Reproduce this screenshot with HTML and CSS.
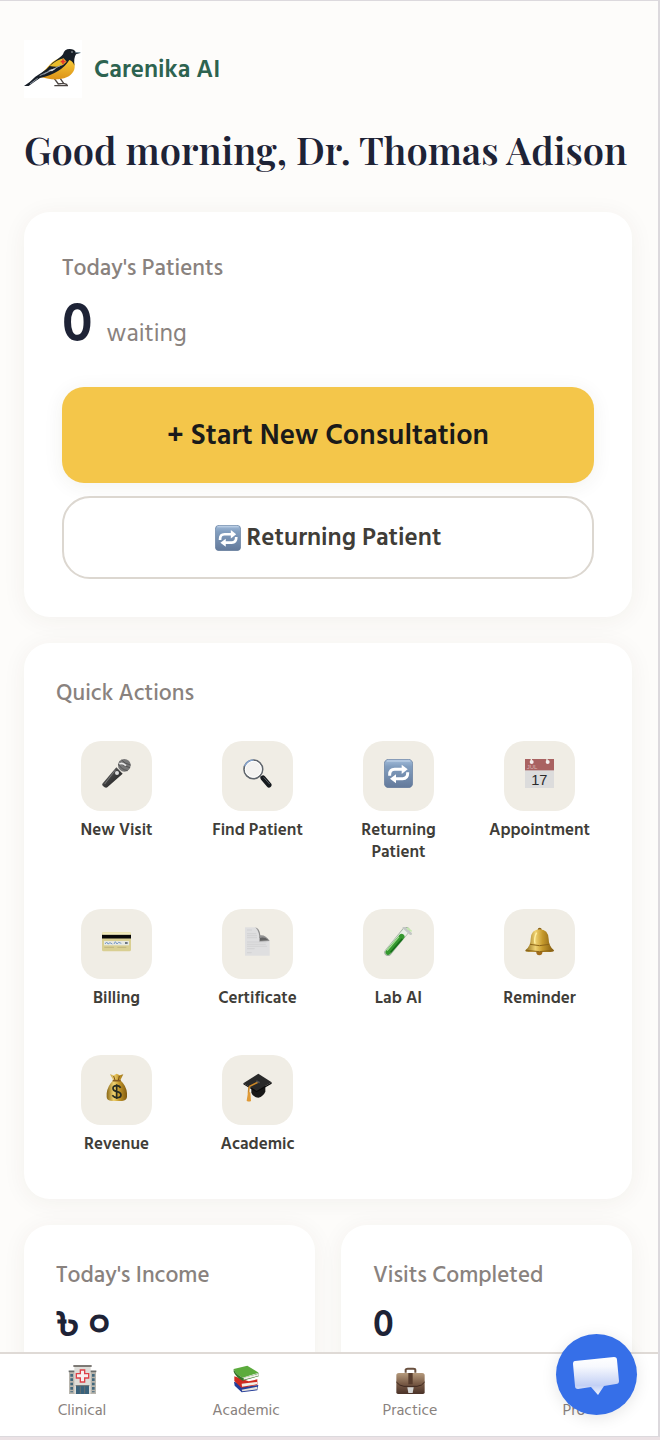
FILE: index.html
```
<!doctype html>
<html lang="en">
<head>
    <meta charset="UTF-8">
    <meta name="viewport" content="width=device-width, initial-scale=1">
    <title>Carenika AI</title>
    <link rel="stylesheet" href="styles.css">
</head>
<body>
<!-- shared icons and gradients -->
<svg class="defs" aria-hidden="true">
    <defs>
        <linearGradient id="blue" x1="0" y1="0" x2="0" y2="1">
            <stop offset="0" stop-color="#a3bddb"/>
            <stop offset=".25" stop-color="#829ebf"/>
            <stop offset="1" stop-color="#63799a"/>
        </linearGradient>
        <linearGradient id="gold" x1="0" y1="0" x2="1" y2="0">
            <stop offset="0" stop-color="#8a6816"/>
            <stop offset=".35" stop-color="#f0d272"/>
            <stop offset=".6" stop-color="#c69a2c"/>
            <stop offset="1" stop-color="#80590f"/>
        </linearGradient>
        <linearGradient id="leather" x1="0" y1="0" x2="0" y2="1">
            <stop offset="0" stop-color="#b59a7c"/>
            <stop offset=".5" stop-color="#7a5c47"/>
            <stop offset="1" stop-color="#4a3228"/>
        </linearGradient>
        <linearGradient id="belly" x1="0" y1="0" x2="0" y2="1">
            <stop offset="0" stop-color="#fbd23c"/>
            <stop offset="1" stop-color="#dc9218"/>
        </linearGradient>
        <linearGradient id="metal" x1="0" y1="0" x2="1" y2="1">
            <stop offset="0" stop-color="#8c8c8c"/>
            <stop offset=".5" stop-color="#3c3c3c"/>
            <stop offset="1" stop-color="#161616"/>
        </linearGradient>
        <linearGradient id="bubble" x1="0" y1="0" x2="0" y2="1">
            <stop offset="0" stop-color="#ffffff"/>
            <stop offset=".25" stop-color="#f7f9fe"/>
            <stop offset=".75" stop-color="#c3d0f5"/>
            <stop offset="1" stop-color="#eef2fd"/>
        </linearGradient>
    </defs>
    <symbol id="repeat" viewBox="0 0 87 87">
        <rect x="1" y="1" width="85" height="85" rx="13" fill="url(#blue)" stroke="#60789a" stroke-width="2"/>
        <path d="M9 6h69" stroke="#c6d7ea" stroke-width="3" stroke-linecap="round"/>
        <path d="M17 50V47Q17 31 32 31H56" fill="none" stroke="#fff" stroke-width="9"/>
        <path d="M53 17L71 31L53 45Z" fill="#fff"/>
        <path d="M71 40V43Q71 59 56 59H33" fill="none" stroke="#fff" stroke-width="9"/>
        <path d="M36 46L18 59L36 73Z" fill="#fff"/>
    </symbol>
</svg>

<div class="app">
    <main class="content">
        <header class="brand">
            <svg class="logo" viewBox="0 0 174 174" aria-hidden="true">
                <rect width="174" height="174" fill="#fff"/>
                <path d="M91 116L103 132M107 113L119 130M91 137H132M101 132L119 130L130 134" fill="none" stroke="#4b4543" stroke-width="4"/>
                <path d="M126 50C146 50 156 68 151 88C146 105 128 116 103 118C84 120 62 113 44 110C64 91 78 66 102 56Z" fill="url(#belly)"/>
                <path d="M0 138Q20 125 34 110Q52 99 68 87Q85 66 105 54Q112 50 117 43Q121 27 137 27Q151 27 155 36L170 38L156 43Q149 53 151 77Q147 63 136 60Q124 80 102 93Q78 108 48 114Q30 126 14 138Z" fill="#171e27"/>
                <path d="M77 78Q99 59 119 55L128 65Q118 77 104 80Q90 81 77 78Z" fill="#e9bd2a"/>
                <path d="M47 107L94 85M59 103L112 75M18 132L41 115" stroke="#8f98a5" stroke-width="3"/>
                <path d="M72 91L97 85L84 94Z" fill="#d9dde2"/>
                <path d="M117 58V73M110 65H125" stroke="#e5392c" stroke-width="5"/>
                <path d="M154 38L169 38" stroke="#7e99a6" stroke-width="3"/>
                <circle cx="144" cy="36" r="2" fill="#d3dce0"/>
            </svg>
            <span class="brand-name">Carenika AI</span>
        </header>
        <h1>Good morning, Dr. Thomas Adison</h1>

        <!-- patients -->
        <section class="card patients">
            <h2>Today's Patients</h2>
            <p class="count"><strong>0</strong> <span>waiting</span></p>
            <button type="button" class="btn btn-primary">+ Start New Consultation</button>
            <button type="button" class="btn btn-outline">
                <svg viewBox="0 0 87 87" aria-hidden="true"><use href="#repeat"/></svg>
                Returning Patient
            </button>
        </section>

        <!-- quick actions -->
        <section class="card">
            <h2>Quick Actions</h2>
            <div class="actions">
                <button type="button" class="action">
                    <span class="tile">
                        <svg viewBox="0 0 87 87" aria-hidden="true">
                            <path d="M43 25L62 44L16 85Q10 88 3 81Q-2 77 3 72Z" fill="url(#metal)"/>
                            <path d="M40 33L8 75" stroke="#777" stroke-width="3"/>
                            <circle cx="67" cy="19" r="19" fill="#777"/>
                            <path d="M49 15Q58 32 77 35M53 8Q63 22 84 26M59 3Q67 14 86 18" fill="none" stroke="#555" stroke-width="3"/>
                            <path d="M52 14Q62 10 72 20" fill="none" stroke="#e8e8e8" stroke-width="5"/>
                            <circle cx="45" cy="42" r="6" fill="#ddd"/>
                        </svg>
                    </span>
                    <span class="label">New Visit</span>
                </button>
                <button type="button" class="action">
                    <span class="tile">
                        <svg viewBox="0 0 87 87" aria-hidden="true">
                            <path d="M49 49L61 61" stroke="#8a8a8a" stroke-width="5"/>
                            <path d="M60 57L78 78" stroke="#15191d" stroke-width="15" stroke-linecap="round"/>
                            <path d="M62 55L80 75" stroke="#5c6266" stroke-width="3"/>
                            <circle cx="31" cy="31" r="28" fill="#f3f2f0" stroke="#5f656c" stroke-width="5"/>
                            <circle cx="31" cy="31" r="24" fill="none" stroke="#fff" stroke-width="3"/>
                            <path d="M5 22Q12 4 31 3" fill="none" stroke="#86a4cf" stroke-width="4"/>
                        </svg>
                    </span>
                    <span class="label">Find Patient</span>
                </button>
                <button type="button" class="action">
                    <span class="tile">
                        <svg viewBox="0 0 87 87" aria-hidden="true"><use href="#repeat"/></svg>
                    </span>
                    <span class="label">Returning Patient</span>
                </button>
                <button type="button" class="action">
                    <span class="tile">
                        <svg viewBox="0 0 87 87" aria-hidden="true">
                            <rect width="87" height="87" fill="#dcdcdc"/>
                            <rect width="87" height="34" fill="#a96261"/>
                            <circle cx="20" cy="9" r="6" fill="#f4eeee"/>
                            <circle cx="68" cy="9" r="6" fill="#f4eeee"/>
                            <path d="M19 0V8M66 0V8" stroke="#efede5" stroke-width="4"/>
                            <text x="5" y="30" class="cal-month">JUL</text>
                            <text x="43" y="77" class="cal-day">17</text>
                        </svg>
                    </span>
                    <span class="label">Appointment</span>
                </button>
                <button type="button" class="action">
                    <span class="tile">
                        <svg viewBox="0 0 87 87" aria-hidden="true">
                            <rect x="0" y="15" width="87" height="58" rx="5" fill="#d9cf92"/>
                            <rect x="1" y="16" width="85" height="8" rx="3" fill="#f1ebbf"/>
                            <path d="M0 29H87" stroke="#080808" stroke-width="11"/>
                            <rect x="6" y="42" width="75" height="13" fill="#e6e8e2"/>
                            <path d="M9 51L14 45L18 51L24 47L31 51M36 51L40 44L45 51L50 46L58 49" fill="none" stroke="#7a9ac5" stroke-width="3"/>
                            <path d="M69 48H77" stroke="#56616b" stroke-width="5"/>
                            <path d="M7 61H36M46 61H73" stroke="#c0b57d" stroke-width="3"/>
                        </svg>
                    </span>
                    <span class="label">Billing</span>
                </button>
                <button type="button" class="action">
                    <span class="tile">
                        <svg viewBox="0 0 87 87" aria-hidden="true">
                            <path d="M6 1H37Q48 7 50 26Q66 25 80 41V86H6Z" fill="#dfdfe0"/>
                            <path d="M37 1Q50 4 52 25Q68 23 80 42L49 44Q52 16 37 1Z" fill="#929292"/>
                            <path d="M40 3Q52 16 50 33Q65 29 76 39L51 41Q52 15 40 3Z" fill="#626262"/>
                            <path d="M12 9H27M12 20H40M12 26H42M12 32H42M12 45H70M12 52H68M12 58H72M12 65H35M12 77H26" stroke="#cbcbcd" stroke-width="2"/>
                        </svg>
                    </span>
                    <span class="label">Certificate</span>
                </button>
                <button type="button" class="action">
                    <span class="tile">
                        <svg viewBox="0 0 87 87" aria-hidden="true">
                            <path d="M66 10L12 76" stroke="#9faf9f" stroke-width="22" stroke-linecap="round"/>
                            <path d="M65 12L13 74" stroke="#e9efe7" stroke-width="18" stroke-linecap="round"/>
                            <path d="M53 29L13 75" stroke="#35982f" stroke-width="17" stroke-linecap="round"/>
                            <path d="M55 35L20 76" stroke="#176e1a" stroke-width="5"/>
                            <path d="M45 29L9 71" stroke="#a0dc90" stroke-width="4"/>
                            <path d="M60 2L80 20" stroke="#c3c7c5" stroke-width="8" stroke-linecap="round"/>
                            <path d="M69 3L83 13" stroke="#c3e9ad" stroke-width="5"/>
                        </svg>
                    </span>
                    <span class="label">Lab AI</span>
                </button>
                <button type="button" class="action">
                    <span class="tile">
                        <svg viewBox="0 0 87 87" aria-hidden="true">
                            <circle cx="43" cy="76" r="9" fill="#a16b1b"/>
                            <circle cx="44" cy="8" r="6" fill="#8c6317"/>
                            <path d="M1 70Q17 58 17 36Q18 8 44 7Q70 8 71 36Q71 58 87 70Q87 75 77 75H11Q0 75 1 70Z" fill="url(#gold)"/>
                            <path d="M15 52Q43 60 73 52M3 70Q43 78 84 70" fill="none" stroke="#8d6518" stroke-width="3"/>
                            <path d="M35 17Q26 34 30 50" fill="none" stroke="#fff0a0" stroke-width="4"/>
                        </svg>
                    </span>
                    <span class="label">Reminder</span>
                </button>
                <button type="button" class="action">
                    <span class="tile">
                        <svg viewBox="0 0 87 87" aria-hidden="true">
                            <path d="M24 4L35 7L44 2L53 7L64 4L55 22Q73 38 75 61V72Q74 83 60 84H29Q14 83 14 72V61Q17 38 34 22Z" fill="url(#gold)"/>
                            <path d="M35 9L39 22M52 9L49 22" stroke="#785016" stroke-width="3"/>
                            <path d="M32 23H56" stroke="#8a5e20" stroke-width="5"/>
                            <path d="M44 34V78M56 44Q52 38 44 38Q33 38 33 46Q33 54 44 56Q57 58 57 66Q57 74 45 74Q36 74 31 67" fill="none" stroke="#292c20" stroke-width="5"/>
                        </svg>
                    </span>
                    <span class="label">Revenue</span>
                </button>
                <button type="button" class="action">
                    <span class="tile">
                        <svg viewBox="0 0 87 87" aria-hidden="true">
                            <path d="M25 41V58Q28 72 46 74Q61 70 67 56V38Z" fill="#171717"/>
                            <path d="M1 31L46 2L86 28L41 54Z" fill="#292929"/>
                            <path d="M1 31L41 54L86 28V32L41 58L1 34Z" fill="#0b0b0b"/>
                            <path d="M46 27L20 40Q16 46 17 62" fill="none" stroke="#cb8727" stroke-width="5"/>
                            <path d="M15 58H22L24 84Q17 88 11 83Z" fill="#e09a36"/>
                            <path d="M40 24L50 29" stroke="#505050" stroke-width="5"/>
                        </svg>
                    </span>
                    <span class="label">Academic</span>
                </button>
            </div>
        </section>

        <!-- stats -->
        <div class="stats">
            <section class="card">
                <h2>Today's Income</h2>
                <p class="value">৳ ০</p>
            </section>
            <section class="card">
                <h2>Visits Completed</h2>
                <p class="value">0</p>
            </section>
        </div>
    </main>

    <!-- bottom navigation -->
    <nav class="tabs">
        <a href="#clinical">
            <svg viewBox="0 0 87 87" aria-hidden="true">
                <rect x="3" y="20" width="81" height="67" fill="#b8b5ad"/>
                <path d="M2 19H85" stroke="#686b69" stroke-width="5"/>
                <rect x="19" y="4" width="49" height="82" fill="#deddd8"/>
                <path d="M16 3H71" stroke="#64615c" stroke-width="5"/>
                <path d="M11 27V82M76 27V82" stroke="#42687d" stroke-width="8" stroke-dasharray="8 5"/>
                <path d="M37 15H50V26H62V39H50V51H37V39H25V26H37Z" fill="#f7f1ef" stroke="#de4148" stroke-width="4"/>
                <rect x="24" y="62" width="39" height="25" fill="#39627c"/>
                <path d="M23 62H64M37 64V86M50 64V86" stroke="#6c706f" stroke-width="3"/>
            </svg>
            <span>Clinical</span>
        </a>
        <a href="#academic">
            <svg viewBox="0 0 87 87" aria-hidden="true">
                <path d="M6 50L50 64L79 60L76 76L29 82L8 62Z" fill="#263e99"/>
                <path d="M29 74L76 65V73L31 79Z" fill="#e7e4dc"/>
                <path d="M7 34L50 49L76 43V60L28 68L7 48Z" fill="#d02b20"/>
                <path d="M29 56L75 51V58L30 65Z" fill="#f2efe6"/>
                <path d="M5 12L46 2L80 23L32 38Q12 30 5 12Z" fill="#5cab3d"/>
                <path d="M5 12Q11 28 33 39L80 25V34L32 47Q10 35 5 20Z" fill="#347528"/>
                <path d="M35 38L80 26V32L35 44Z" fill="#f0efe7"/>
            </svg>
            <span>Academic</span>
        </a>
        <a href="#practice">
            <svg viewBox="0 0 87 87" aria-hidden="true">
                <path d="M29 23V14Q30 11 35 11H52Q58 11 58 15V23" fill="none" stroke="#69503f" stroke-width="6"/>
                <path d="M1 29Q2 24 8 24H79Q85 24 86 29V82Q86 87 81 87H6Q1 87 1 82Z" fill="url(#leather)"/>
                <path d="M1 51Q10 63 24 64H63Q78 63 86 51" fill="none" stroke="#3f2920" stroke-width="3"/>
                <rect x="37" y="24" width="13" height="34" fill="#573c2d"/>
                <path d="M34 67H53L50 84H37Z" fill="#d5d6d5"/>
            </svg>
            <span>Practice</span>
        </a>
        <a href="#pro">
            <svg viewBox="0 0 87 87" aria-hidden="true">
                <path d="M43 4L55 31L84 34L62 53L69 82L43 67L18 82L25 53L3 34L32 31Z" fill="#f2b632"/>
            </svg>
            <span>Pro</span>
        </a>
    </nav>
</div>

<button type="button" class="chat" aria-label="Open chat">
    <svg viewBox="0 0 81 81" aria-hidden="true">
        <path d="M19 27L58 23Q61 23 61 26L63 47Q63 50 60 50L48 52L42 61L35 53L22 55Q19 55 19 52L17 30Q17 27 19 27Z" fill="url(#bubble)"/>
    </svg>
</button>
</body>
</html>
```
FILE: styles.css
```
* {
    box-sizing: border-box;
    margin: 0;
    padding: 0;
}

body {
    background: #ebe2e5;
    color: #1e2336;
    font-family: "Hind Siliguri", "Noto Sans CJK SC", "Noto Sans", sans-serif;
}

button {
    border: 0;
    background: none;
    font-family: inherit;
    cursor: pointer;
}

a {
    color: inherit;
    text-decoration: none;
}

.defs {
    position: absolute;
    width: 0;
    height: 0;
}

.app {
    display: flex;
    flex-direction: column;
    height: calc(100vh - 3px);
    background: #fdfcfa;
    border: solid #dcd9dd;
    border-width: 1px 2px 1px 0;
}

.content {
    flex: 1;
    min-height: 0;
    display: flex;
    flex-direction: column;
    gap: 26px;
    padding: 39px 26px 26px 24px;
    overflow-y: auto;
    scrollbar-width: none;
}

.brand {
    display: flex;
    align-items: center;
    gap: 12px;
}

.logo {
    width: 58px;
    height: 58px;
}

.brand-name {
    color: #2d6350;
    font-size: 25px;
    font-weight: 600;
}

h1 {
    font-family: "Playfair Display", "Liberation Serif", serif;
    font-size: 38px;
    font-weight: 600;
    line-height: 52px;
    margin-bottom: 10px;
    white-space: nowrap;
}

h2 {
    color: #89827e;
    font-size: 23px;
    font-weight: 500;
    line-height: 36px;
}

.card {
    flex-shrink: 0;
    padding: 32px;
    background: #fff;
    border-radius: 26px;
    box-shadow: 0 3px 24px rgba(60, 50, 30, 0.06);
}

.patients {
    padding: 38px;
}

.count {
    display: flex;
    align-items: baseline;
    gap: 14px;
    margin-bottom: 15px;
    line-height: 76px;
}

.count strong {
    font-size: 56px;
    font-weight: 600;
}

.count span {
    color: #89827e;
    font-size: 25px;
}

.btn {
    display: flex;
    align-items: center;
    justify-content: center;
    gap: 6px;
    width: 100%;
    font-weight: 600;
}

.btn-primary {
    height: 96px;
    margin-bottom: 13px;
    border-radius: 22px;
    background: #f4c64a;
    box-shadow: 0 3px 20px rgba(60, 50, 30, 0.07);
    color: #1a1a1a;
    font-size: 29px;
}

.btn-outline {
    height: 83px;
    border: 2px solid #dcd7d0;
    border-radius: 28px;
    background: #fff;
    color: #403d38;
    font-size: 25px;
}

.btn-outline svg {
    width: 26px;
    height: 26px;
}

.actions {
    display: grid;
    grid-template-columns: repeat(4, 1fr);
    gap: 22px 20px;
    margin-top: 18px;
}

.action {
    display: flex;
    flex-direction: column;
    align-items: center;
    gap: 8px;
    padding: 12px 6px;
}

.tile {
    display: flex;
    align-items: center;
    justify-content: center;
    width: 71px;
    height: 70px;
    padding-bottom: 6px;
    border-radius: 20px;
    background: #f0ede5;
}

.tile svg {
    width: 29px;
    height: 29px;
}

.cal-month {
    fill: #d9b5b4;
    font: 18px "Liberation Sans", sans-serif;
}

.cal-day {
    fill: #2b2b2b;
    font: 44px "Liberation Sans", sans-serif;
    text-anchor: middle;
}

.label {
    color: #403d38;
    font-size: 17px;
    font-weight: 600;
    line-height: 22px;
}

.stats {
    flex-shrink: 0;
    display: grid;
    grid-template-columns: 1fr 1fr;
    gap: 26px;
}

.value {
    font-size: 38px;
    font-weight: 600;
    line-height: 64px;
}

.tabs {
    display: grid;
    grid-template-columns: repeat(4, 1fr);
    padding: 11px 2px 14px 0;
    background: #fff;
    border-top: 2px solid #dfdad6;
}

.tabs a {
    display: flex;
    flex-direction: column;
    align-items: center;
    gap: 4px;
    color: #89827e;
    font-size: 16px;
    line-height: 24px;
}

.tabs svg {
    width: 29px;
    height: 29px;
}

.chat {
    position: fixed;
    right: 23px;
    bottom: 25px;
    width: 81px;
    height: 81px;
    border-radius: 50%;
    background: #366fe8;
    box-shadow: 0 3px 16px rgba(0, 0, 0, 0.1);
}

.chat svg {
    display: block;
    width: 100%;
}
```
